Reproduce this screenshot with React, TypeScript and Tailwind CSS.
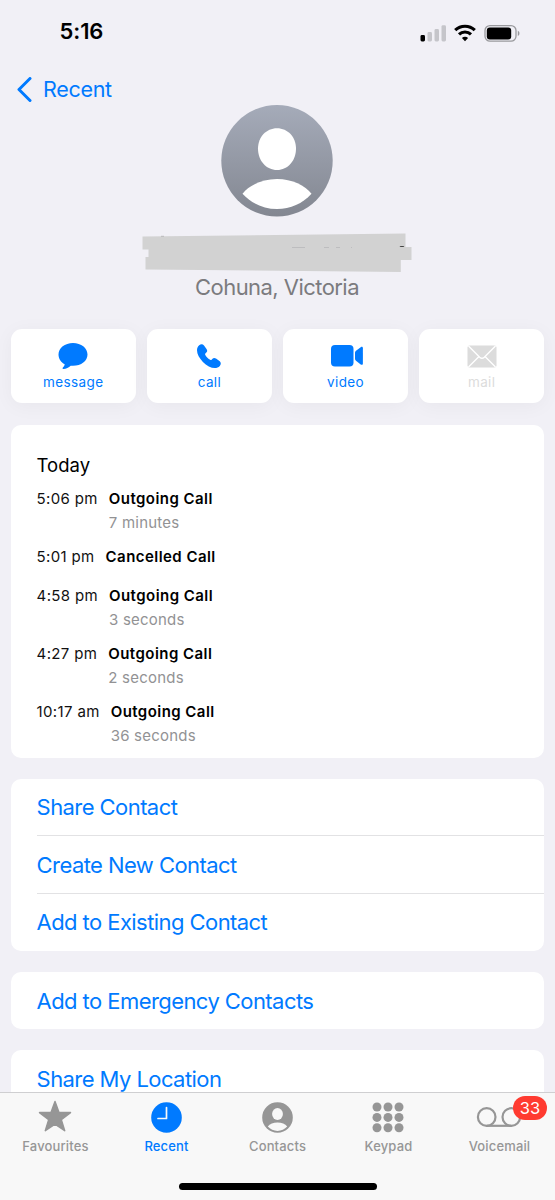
import type { ReactNode } from 'react';
import clsx from 'clsx';

interface CallEntry {
  time: string;
  kind: string;
  duration?: string;
}

const calls: CallEntry[] = [
  { time: '5:06 pm', kind: 'Outgoing Call', duration: '7 minutes' },
  { time: '5:01 pm', kind: 'Cancelled Call' },
  { time: '4:58 pm', kind: 'Outgoing Call', duration: '3 seconds' },
  { time: '4:27 pm', kind: 'Outgoing Call', duration: '2 seconds' },
  { time: '10:17 am', kind: 'Outgoing Call', duration: '36 seconds' },
];

function StatusBar() {
  return (
    <div className="flex h-[63px] items-center justify-between pl-[59.5px] pr-[35px]">
      <span className="text-[22px] font-semibold tracking-[-0.1px] text-black">5:16</span>
      <svg width="100" height="20" viewBox="0 0 100 20">
        <rect x="0.5" y="13" width="4.5" height="6.5" rx="1.4" />
        <g fill="#c5c5ca">
          <rect x="7.5" y="10" width="4.5" height="9.5" rx="1.4" />
          <rect x="14.5" y="7" width="4.5" height="12.5" rx="1.4" />
          <rect x="21.5" y="3.2" width="4.5" height="16.3" rx="1.4" />
        </g>
        <g transform="translate(0 -1)">
          <g fill="none" stroke="#000" strokeWidth="3.1">
            <path d="M35.2 9.200a14 14 0 0 1 19.600 0" />
            <path d="M39 13.400a8.600 8.600 0 0 1 12 0" />
          </g>
          <path d="M45 20.200l-3.100-3.100a4.400 4.400 0 0 1 6.200 0z" />
        </g>
        <rect x="65" y="3.6" width="31" height="15.6" rx="5" fill="none" stroke="#99999d" strokeWidth="1.3" />
        <rect x="66.8" y="5.4" width="24.4" height="12" rx="3" />
        <path d="M97.8 8.8v5.2c2.2-.8 2.2-4.4 0-5.2z" fill="#99999d" />
      </svg>
    </div>
  );
}

function Avatar() {
  return (
    <svg width="112" height="112" viewBox="0 0 112 112">
      <defs>
        <linearGradient id="avatar" x1="0" y1="0" x2="0" y2="1">
          <stop offset="0" stopColor="#a5abb9" />
          <stop offset="1" stopColor="#838791" />
        </linearGradient>
      </defs>
      <circle cx="56" cy="55.8" r="55.7" fill="url(#avatar)" />
      <path d="M56 23.2c10.8 0 19 8.8 19 20.3 0 12.2-8.2 21.5-19 21.5s-19-9.3-19-21.5c0-11.5 8.2-20.3 19-20.3z" fill="#fff" />
      <path d="M21.5 88.7C28 80.5 40.5 74 56 74s28 6.5 34.500 14.700C81.500 98.500 69.500 104 56 104s-25.500-5.500-34.500-15.300z" fill="#fff" />
    </svg>
  );
}

function RedactedName() {
  return (
    <svg className="mt-[15px]" width="271" height="40" viewBox="0 0 271 40">
      <path
        d="M.5 4.5 263.5 1.500v13.500h6v13h-10.700v12L3.500 37.500V25h3v-7.500h-6z"
        fill="#d2d2d2"
      />
      <path d="M182 15.500h5M194 15.500h4M209 15.500h1M150 15.500h13" stroke="#bdbdbf" strokeWidth="1" />
      <path d="M257.500 15l1-1h3l.8 1z" fill="#444" />
      <path d="M19 4.300h3" stroke="#b0b0b3" strokeWidth=".8" />
    </svg>
  );
}

function ActionButton({ label, disabled, children }: { label: string; disabled?: boolean; children: ReactNode }) {
  return (
    <button
      className={clsx(
        'flex h-[74px] flex-1 flex-col items-center rounded-[11px] bg-white pt-[12px] shadow-[0_3px_20px_rgba(0,0,0,0.045)]',
        disabled ? 'text-[#dcdcdc]' : 'text-[#007aff]',
      )}
    >
      <span className="flex h-[30px] items-center">{children}</span>
      <span className="text-[13.5px] leading-[23px] tracking-[0.4px]">{label}</span>
    </button>
  );
}

function Card({ children, className }: { children: ReactNode; className?: string }) {
  return <div className={clsx('ml-[10.6px] mr-[10.6px] overflow-hidden rounded-[10px] bg-white', className)}>{children}</div>;
}

function LinkRow({ label, divider }: { label: string; divider?: boolean }) {
  return (
    <div className={clsx('ml-[26px] flex h-[57.3px] items-center pt-[1.5px] text-[22px] tracking-[-0.57px] text-[#007aff]', divider && 'border-b border-[#e2e2e4]')}>
      {label}
    </div>
  );
}

function Tab({ label, active, children }: { label: string; active?: boolean; children: ReactNode }) {
  return (
    <div className={clsx('flex w-[111px] flex-col items-center', active ? 'text-[#007aff]' : 'text-[#969696]')}>
      <span className="relative mr-[1px] flex h-[34px] items-center">{children}</span>
      <span className="mt-[3px] text-[13px] font-medium leading-[18px] tracking-[0.15px]">{label}</span>
    </div>
  );
}

function TabBar() {
  return (
    <div className="flex h-[108px] shrink-0 flex-col items-center border-t border-[#cfcfd1] bg-[#f8f8f8] pt-[7px]">
      <div className="flex">
        <Tab label="Favourites">
          <svg width="34" height="34" viewBox="0 0 34 34" fill="currentColor" stroke="currentColor" strokeWidth="1.5" strokeLinejoin="round">
            <path d="M17 1.500l3.900 10.800 11.600.3-9.200 7.100 3.400 11-9.700-6.500-9.700 6.500 3.400-11-9.200-7.100 11.600-.3z" />
          </svg>
        </Tab>
        <Tab label="Recent" active>
          <svg width="31" height="31" viewBox="0 0 31 31">
            <circle cx="15.5" cy="15.5" r="15.3" fill="currentColor" />
            <path d="M15.5 5.500v11H7" fill="none" stroke="#f8f8f8" strokeWidth="1.7" strokeLinecap="round" strokeLinejoin="round" />
          </svg>
        </Tab>
        <Tab label="Contacts">
          <svg width="31" height="31" viewBox="0 0 31 31">
            <circle cx="15.5" cy="15.5" r="15.3" fill="currentColor" />
            <ellipse cx="15.5" cy="12" rx="5.4" ry="6" fill="#f8f8f8" />
            <path d="M5.8 24.600c2-2.500 5.500-4 9.700-4s7.700 1.500 9.700 4c-2.500 2.800-6 4.300-9.700 4.300s-7.200-1.500-9.700-4.300z" fill="#f8f8f8" />
          </svg>
        </Tab>
        <Tab label="Keypad">
          <svg width="32" height="31" viewBox="0 0 32 31" fill="currentColor">
            {[5, 15.4, 25.8].map((y) => [5, 16, 27].map((x) => <circle key={`${x}-${y}`} cx={x} cy={y} r="4.5" />))}
          </svg>
        </Tab>
        <Tab label="Voicemail">
          <svg width="46" height="20" viewBox="0 0 46 20" fill="none" stroke="currentColor" strokeWidth="2.2">
            <circle cx="10.7" cy="10" r="8.8" />
            <circle cx="35.3" cy="10" r="8.8" />
            <path d="M10.7 18.800h24.600" />
          </svg>
          <span className="absolute left-[37px] top-[-4px] flex h-[24px] w-[34px] items-center justify-center rounded-full bg-[#ff3b30] text-[16.5px] text-white">
            33
          </span>
        </Tab>
      </div>
      <div className="mt-[28px] h-[7px] w-[198px] rounded-full bg-black" />
    </div>
  );
}

export default function App() {
  return (
    <div className="flex h-[1200px] w-[555px] flex-col overflow-hidden bg-[#f1f0f6] font-['Inter',sans-serif]">
      <div className="min-h-0 flex-1 overflow-hidden">
        <StatusBar />

        <div className="flex h-[53px] items-center pl-[17px] text-[#007aff]">
          <svg width="15" height="26" viewBox="0 0 15 26" fill="none" stroke="currentColor" strokeWidth="3" strokeLinecap="round" strokeLinejoin="round">
            <path d="M13 1.500 2 12.500l11 11" />
          </svg>
          <span className="ml-[11px] text-[21.5px] tracking-[-0.3px]">Recent</span>
        </div>

        <div className="-mt-[11px] mr-[1px] flex flex-col items-center">
          <Avatar />
          <RedactedName />
          <p className="mt-[1px] text-[22px] leading-[28px] tracking-[-0.55px] text-[#7b7b7e]">Cohuna, Victoria</p>
        </div>

        <div className="mx-[11px] mt-[28px] flex gap-[11.5px]">
          <ActionButton label="message">
            <svg width="30" height="28" viewBox="0 0 30 28" fill="currentColor">
              <path d="M15 1c8.200 0 14.500 5 14.500 11.500S23.200 23.800 15 23.800c-.8 0-1.600 0-2.300-.1-2 1.600-4.600 3-7.200 3.300-1 .1-1.300-.8-.6-1.500 1-1 1.700-2 1.800-3.200C3 20.300.5 16.800.5 12.500.5 6 6.800 1 15 1z" />
            </svg>
          </ActionButton>
          <ActionButton label="call">
            <svg width="24" height="24" viewBox="0 0 24 24" fill="currentColor">
              <path d="M5.900 17.900C2.400 14.400 0 10 0 6.300c0-2 .7-3.700 2.200-5C3.800-.1 5.800 0 7 1.600l2.500 3.500c1 1.500.9 2.400-.2 3.500l-.9.9c-.4.4-.4.9-.1 1.400 1.100 1.900 3 3.800 4.900 4.900.5.3 1 .3 1.400-.1l.9-.9c1.100-1.100 2-1.200 3.500-.2l3.400 2.400c1.700 1.200 1.800 3.300.4 4.900-1.300 1.500-3 2.100-5 2.100-3.700 0-8.300-2.500-11.900-6.100z" />
            </svg>
          </ActionButton>
          <ActionButton label="video">
            <svg className="ml-[2px]" width="32" height="22" viewBox="0 0 32 22" fill="currentColor">
              <rect width="22.5" height="21.5" rx="4" />
              <path d="M24 8c0-1 .3-1.600 1-2.200l4.700-3.600c1.200-.9 2.200-.4 2.200 1v15.200c0 1.400-1 1.900-2.200 1L25 15.800c-.7-.6-1-1.200-1-2.200z" />
            </svg>
          </ActionButton>
          <ActionButton label="mail" disabled>
            <svg width="30" height="23" viewBox="0 0 30 23">
              <rect x=".5" y=".5" width="29" height="22" rx="2" fill="currentColor" />
              <path d="M1.500 1 12.700 12.200c1.500 1.400 3.100 1.400 4.600 0L28.500 1M1.500 22 12 11.500M28.500 22 18 11.500" fill="none" stroke="#fff" strokeWidth="1.4" />
            </svg>
          </ActionButton>
        </div>

        <Card className="mt-[22px] h-[333px] pl-[26px] pt-[26px]">
          <h2 className="h-[36px] text-[18.5px] leading-[29px] text-black">Today</h2>
          {calls.map((call) => (
            <div key={call.time} className={clsx('flex gap-[11px] text-[15px] leading-[24px]', call.duration ? 'h-[58px]' : 'h-[39px]')}>
              <span className="tracking-[0.35px] text-[#111]">{call.time}</span>
              <div>
                <p className="font-semibold tracking-[0.45px] text-black">{call.kind}</p>
                {call.duration && <p className="tracking-[0.22px] text-[#929294]">{call.duration}</p>}
              </div>
            </div>
          ))}
        </Card>

        <Card className="mt-[21px]">
          <LinkRow label="Share Contact" divider />
          <LinkRow label="Create New Contact" divider />
          <LinkRow label="Add to Existing Contact" />
        </Card>

        <Card className="mt-[21px]">
          <LinkRow label="Add to Emergency Contacts" />
        </Card>

        <Card className="mt-[21px]">
          <LinkRow label="Share My Location" />
        </Card>
      </div>

      <TabBar />
    </div>
  );
}
